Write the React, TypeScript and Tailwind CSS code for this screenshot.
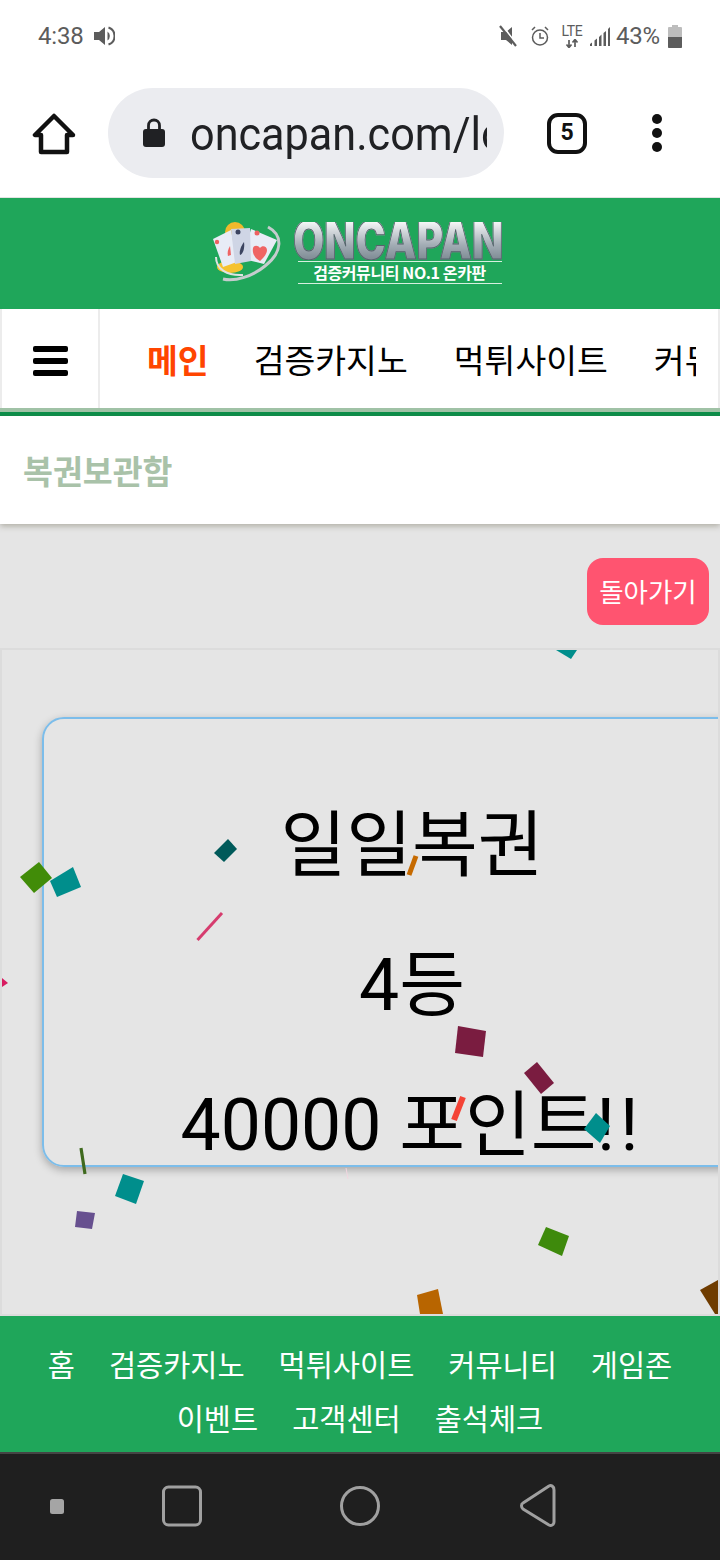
const FONT = "font-['Roboto','Noto_Sans_CJK_KR',sans-serif]";

const polys: [string, string][] = [
  ["20,877 39,862 52,878 34,893", "#418c08"],
  ["50,881 73,867 81,887 57,897", "#008e8c"],
  ["214,853 228,839 237,849 224,862", "#005a5a"],
  ["556,650 577,650 571,659", "#008e8c"],
  ["2,978 8,983 2,987", "#d81b60"],
  ["123,1174 144,1181 136,1204 115,1196", "#008e8c"],
  ["77,1211 95,1213 92,1229 75,1227", "#67508f"],
  ["458,1026 486,1031 483,1057 455,1053", "#7a1c40"],
  ["537,1062 554,1083 541,1094 524,1073", "#7a1c40"],
  ["596,1113 610,1126 600,1143 584,1129", "#008e8c"],
  ["546,1227 569,1236 562,1256 538,1245", "#3e8a0c"],
  ["417,1295 438,1289 443,1314 420,1314", "#b86500"],
  ["700,1290 718,1280 718,1314 715,1314", "#6f3c00"],
];
const lines: [number, number, number, number, string, number][] = [
  [197.5, 940, 222, 913, "#d63c6e", 3],
  [409, 875, 416, 856, "#c66a00", 5],
  [81, 1148, 85, 1174, "#3f6a1e", 3.2],
  [463, 1097, 454, 1120, "#f44336", 6],
  [346, 1168, 348, 1179, "#f2d6e0", 1],
];

function Confetti() {
  return (
    <svg className="absolute left-[-2px] top-[-650px] w-[720px] h-[1560px] pointer-events-none" viewBox="0 0 720 1560">
      {polys.map(([p, c], i) => <polygon key={i} points={p} fill={c} />)}
      {lines.map(([a, b, x, y, c, w], i) => <line key={i} x1={a} y1={b} x2={x} y2={y} stroke={c} strokeWidth={w} />)}
    </svg>
  );
}

function StatusBar() {
  return (
    <div className="h-[72px] flex items-center justify-between pl-[38px] pr-[38px] text-[#5c5c5c] font-['Roboto',sans-serif]">
      <div className="flex items-center gap-[11px]">
        <span className="text-[24px] tracking-[-0.2px]">4:38</span>
        <svg width="21" height="20" viewBox="0 0 21 20" fill="#5c5c5c">
          <path d="M0 6h5l6-5v18l-6-5H0z" />
          <path d="M13.500 5.500a5.500 5.500 0 0 1 0 9V5.500z" />
          <path d="M14.500 1.500a9 9 0 0 1 0 17" fill="none" stroke="#5c5c5c" strokeWidth="2" />
        </svg>
      </div>
      <div className="flex items-center">
        <svg width="20" height="22" viewBox="0 0 20 22" fill="#5c5c5c" className="mr-[11px]">
          <path d="M2 7h5l6-5v18l-6-5H2z" />
          <path d="M3 0l16 21" stroke="#fff" strokeWidth="1.800" />
          <path d="M1 1l16 20" stroke="#5c5c5c" strokeWidth="2.200" />
        </svg>
        <svg width="20" height="22" viewBox="0 0 20 22" fill="none" stroke="#5c5c5c" strokeWidth="1.500" className="mr-[11px]">
          <circle cx="10" cy="12.500" r="7.500" />
          <path d="M10 8v5h4M2 5l3-3M18 5l-3-3" />
        </svg>
        <div className="w-[22px] mr-[6px] flex flex-col items-center leading-none">
          <span className="text-[14px] leading-[13px] tracking-[-0.3px]">LTE</span>
          <svg width="16" height="9" viewBox="0 0 16 9" stroke="#5c5c5c" strokeWidth="1.700" className="mt-[1px]">
            <path d="M5 1v7M2.500 5.500 5 8.500l2.500-3M11 8V1M8.500 3.500 11 .5l2.500 3" fill="none" />
          </svg>
        </div>
        <svg width="22" height="21" viewBox="0 0 22 21" fill="#5c5c5c" className="mr-[5px]">
          <path d="M1 18l2-1.500V20H1zM5.500 14.500 8 12.500V20H5.500zM10 11l2.500-2.500V20H10zM14.500 7 17 5v15h-2.500zM19 3l2-2v19h-2z" />
        </svg>
        <span className="w-[44px] text-[24px] leading-[28px] tracking-[-0.3px] mr-[8px]">43%</span>
        <div className="w-[14px] h-[23px] flex flex-col items-center">
          <div className="w-[6px] h-[2px] bg-[#bdbdbd]" />
          <div className="w-[14px] h-[21px] rounded-[1px] bg-[#bdbdbd] flex flex-col justify-end">
            <div className="h-[11px] rounded-b-[1px] bg-[#5c5c5c]" />
          </div>
        </div>
      </div>
    </div>
  );
}

function ChromeBar() {
  return (
    <div className="h-[126px] flex items-start pt-[16px] border-b border-[#e3e3e3] bg-white">
      <div className="w-[108px] h-[90px] flex items-center justify-center">
        <svg width="44" height="42" viewBox="0 0 44 42" fill="none" stroke="#111" strokeWidth="4.500" strokeLinejoin="round" className="mt-[1px]">
          <path d="M22 3 3 22h6v17h26V22h6z" />
        </svg>
      </div>
      <div className="w-[396px] h-[90px] bg-[#ebecf0] rounded-full flex items-center pl-[34px] pr-[17px]">
        <svg width="24" height="31" viewBox="0 0 24 31" className="shrink-0 mt-[-2px]">
          <path d="M6.500 13V8.500a5.500 5.500 0 0 1 11 0V13" fill="none" stroke="#202124" strokeWidth="2.800" />
          <rect x="1" y="12" width="22" height="18" rx="3" fill="#202124" />
        </svg>
        <div className="ml-[24px] w-[297px] overflow-hidden whitespace-nowrap text-[43.200px] leading-[60px] mt-[4px] scale-y-[1.08] text-[#202124] font-['Roboto',sans-serif]">
          oncapan.com/login
        </div>
      </div>
      <div className="w-[126px] h-[90px] flex items-center justify-center">
        <div className="w-[40px] h-[41px] border-[4px] border-[#111] rounded-[11px] flex items-center justify-center text-[23px] font-bold text-[#111] font-['Roboto',sans-serif]">5</div>
      </div>
      <div className="w-[54px] h-[90px] flex flex-col items-center justify-center gap-[4px]">
        <div className="w-[10px] h-[10px] rounded-full bg-[#111]" />
        <div className="w-[10px] h-[10px] rounded-full bg-[#111]" />
        <div className="w-[10px] h-[10px] rounded-full bg-[#111]" />
      </div>
    </div>
  );
}

function Logo() {
  return (
    <div className="h-[111px] bg-[#1fa65a] flex items-start justify-center pt-[24px] pr-[4px]">
      <svg width="70" height="64" viewBox="0 0 70 64" className="mr-[10px] shrink-0">
        <circle cx="22" cy="10" r="10" fill="#f0b92c" />
        <ellipse cx="17" cy="45" rx="13" ry="6" fill="#f5c22f" />
        <path d="M0 17 18 8l6 32-14 5z" fill="#e8ecf6" />
        <path d="M38 7l26 11-13 24-21-5z" fill="#e8ecf6" />
        <path d="M18 7l19-1 1 33-16 3z" fill="#cfd5e5" />
        <circle cx="4" cy="20" r="2.200" fill="#ec6262" />
        <circle cx="44" cy="11" r="2.500" fill="#ec6262" />
        <circle cx="25" cy="10" r="2.500" fill="#3c4460" />
        <path d="M31 20c-3 4-5 9-4 13 3-1 5-7 4-13z" fill="#3c4460" />
        <path d="M47 39c-5-3-8-7-7-13 1-3 5-3 7 0 2-3 7-2 7 2 0 4-3 7-7 11z" fill="#ef6464" />
        <path d="M17 24c-2 3-3 7-2 10l3-1z" fill="#ef6464" />
        <path d="M55 5C70 13 70 30 52 44 40 54 22 60 10 57" fill="none" stroke="#c5ccce" strokeWidth="3" />
        <path d="M3 35C3 47 14 54 30 53" fill="none" stroke="#dfe3e2" strokeWidth="2" />
      </svg>
      <div className="flex flex-col items-center w-[210px] shrink-0">
        <div className="w-[300px] h-[38px] shrink-0 overflow-hidden text-center text-[52px] leading-[38px] font-black font-['Inter',sans-serif] bg-gradient-to-b from-[#f5f6f7] via-[#a3adb5] via-60% to-[#7d8a93] bg-clip-text text-transparent [-webkit-text-stroke:1px_#55636b] scale-x-[0.78] whitespace-nowrap">
          ONCAPAN
        </div>
        <div className="mt-[1px] ml-[3px] w-[204px] h-[23px] border-y border-[#d6efdf] flex items-center justify-center text-white text-[16px] leading-[21px] font-bold whitespace-nowrap font-['Noto_Sans_CJK_KR',sans-serif] tracking-[-0.4px]">
          검증커뮤니티 NO.1 온카판
        </div>
      </div>
    </div>
  );
}

function Nav() {
  return (
    <div className="h-[107px] flex flex-col">
      <div className="h-[99px] bg-[#ececec] px-[2px] flex">
        <div className="w-[98px] bg-white border-r-2 border-[#ececec] flex flex-col items-center justify-center gap-[6px] pt-[5px]">
          <div className="w-[35px] h-[6px] rounded-[2px] bg-black" />
          <div className="w-[35px] h-[6px] rounded-[2px] bg-black" />
          <div className="w-[35px] h-[6px] rounded-[2px] bg-black" />
        </div>
        <div className="flex-1 bg-white overflow-hidden pr-[22px]">
          <div className={`h-full overflow-hidden flex items-center pt-[8px] pl-[47px] gap-[46px] whitespace-nowrap text-[33.500px] text-black ${FONT}`}>
            <span className="font-bold text-[#ff4500] mr-[-1px]">메인</span>
            <span>검증카지노</span>
            <span>먹튀사이트</span>
            <span>커뮤니티</span>
          </div>
        </div>
      </div>
      <div className="h-[4px] bg-[#a0c2a6]" />
      <div className="h-[4px] bg-[#0b8f4a]" />
    </div>
  );
}

function Title() {
  return (
    <div className="relative h-[108px] bg-white flex items-center pl-[23px] pt-[7px] shadow-[0_2px_6px_rgba(90,85,60,0.4)]">
      <span className={`text-[32.500px] font-bold text-[#a9c2a9] ${FONT}`}>복권보관함</span>
    </div>
  );
}

function Game() {
  return (
    <div className="flex-1 flex flex-col bg-[#e5e5e5] min-h-0">
      <div className="h-[124px] flex justify-end items-start pt-[34px] pr-[11px]">
        <button className={`w-[122px] h-[67px] rounded-[16px] bg-[#ff5470] text-white text-[26.500px] pt-[2px] whitespace-nowrap ${FONT}`}>돌아가기</button>
      </div>
      <div className="relative flex-1 border-2 border-[#dcdcdc] overflow-hidden pl-[40px] pt-[67px]">
        <div className={`w-[740px] h-[450px] rounded-[22px] border-2 border-[#7cbdea] shadow-[0_3px_8px_rgba(0,0,0,0.28)] flex flex-col items-center pt-[85px] gap-[56px] text-[71.500px] leading-[84px] text-black whitespace-nowrap ${FONT}`}>
          <p>일일복권</p>
          <p>4등</p>
          <p>40000 포인트<span className="tracking-[5px]">!!</span></p>
        </div>
        <Confetti />
      </div>
    </div>
  );
}

function Footer() {
  const rows = [
    ["홈", "검증카지노", "먹튀사이트", "커뮤니티", "게임존"],
    ["이벤트", "고객센터", "출석체크"],
  ];
  return (
    <div className={`h-[136px] bg-[#1fa65a] flex flex-col items-center justify-center pt-[18px] text-white text-[29.500px] leading-[54px] ${FONT}`}>
      {rows.map((r, i) => (
        <div key={i} className="flex justify-center gap-[34px] whitespace-nowrap">
          {r.map((t) => <span key={t}>{t}</span>)}
        </div>
      ))}
    </div>
  );
}

function SysNav() {
  return (
    <div className="h-[108px] bg-[#1f1f1f] border-t-2 border-[#444] flex items-center">
      <svg width="720" height="106" viewBox="0 0 720 106" fill="none" stroke="#a0a0a0" strokeWidth="3">
        <rect x="50" y="45" width="14" height="15" rx="2.500" fill="#a5a5a5" stroke="none" />
        <rect x="163.500" y="33" width="37" height="38" rx="5" />
        <circle cx="360" cy="52" r="18.500" />
        <path d="M554 36v32c0 3-3 4-5 3L523 55c-2-2-2-5 0-6l26-17c2-1 5 0 5 4z" strokeLinejoin="round" />
      </svg>
    </div>
  );
}

export default function App() {
  return (
    <div className={`w-[720px] h-[1560px] overflow-hidden flex flex-col bg-white ${FONT}`}>
      <StatusBar />
      <ChromeBar />
      <Logo />
      <Nav />
      <Title />
      <Game />
      <Footer />
      <SysNav />
    </div>
  );
}
